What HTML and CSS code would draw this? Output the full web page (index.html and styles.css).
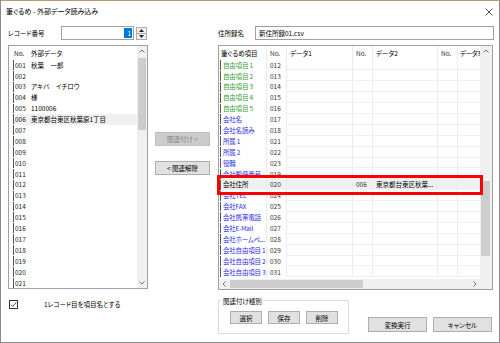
FILE: index.html
```html
<!DOCTYPE html>
<html lang="ja">
<head>
<meta charset="utf-8">
<link rel="stylesheet" href="styles.css">
</head>
<body>
<div class="window">
  <div class="titlebar">
    <span class="title">筆ぐるめ - 外部データ読み込み</span>
    <svg class="close" width="8" height="8" viewBox="0 0 8 8"><path d="M0.5 0.5L7.5 7.5M7.5 0.5L0.5 7.5" stroke="#222" stroke-width="0.8" fill="none"/></svg>
  </div>
  <div class="client">
    <div class="col-left">
      <div class="field-row">
        <span class="label">レコード番号</span>
        <div class="input num"><span class="sel">1</span></div>
        <div class="spin">
          <span class="spin-btn"><svg width="5" height="3" viewBox="0 0 5 3"><path d="M0 3L2.5 0L5 3Z" fill="#222"/></svg></span>
          <span class="spin-btn"><svg width="5" height="3" viewBox="0 0 5 3"><path d="M0 0L2.5 3L5 0Z" fill="#222"/></svg></span>
        </div>
      </div>
      <div class="listbox">
        <div class="lb-body">
          <div class="lb-head"><span class="c-no">No.</span><span class="c-data">外部データ</span></div>
          <div class="lb-row"><span class="c-no">001</span><span class="c-data">秋葉　一郎</span></div>
          <div class="lb-row"><span class="c-no">002</span><span class="c-data"></span></div>
          <div class="lb-row"><span class="c-no">003</span><span class="c-data">アキバ　イチロウ</span></div>
          <div class="lb-row"><span class="c-no">004</span><span class="c-data">様</span></div>
          <div class="lb-row"><span class="c-no">005</span><span class="c-data">1100006</span></div>
          <div class="lb-row hl"><span class="c-no">006</span><span class="c-data">東京都台東区秋葉原1丁目</span></div>
          <div class="lb-row"><span class="c-no">007</span><span class="c-data"></span></div>
          <div class="lb-row"><span class="c-no">008</span><span class="c-data"></span></div>
          <div class="lb-row"><span class="c-no">009</span><span class="c-data"></span></div>
          <div class="lb-row"><span class="c-no">010</span><span class="c-data"></span></div>
          <div class="lb-row"><span class="c-no">011</span><span class="c-data"></span></div>
          <div class="lb-row"><span class="c-no">012</span><span class="c-data"></span></div>
          <div class="lb-row"><span class="c-no">013</span><span class="c-data"></span></div>
          <div class="lb-row"><span class="c-no">014</span><span class="c-data"></span></div>
          <div class="lb-row"><span class="c-no">015</span><span class="c-data"></span></div>
          <div class="lb-row"><span class="c-no">016</span><span class="c-data"></span></div>
          <div class="lb-row"><span class="c-no">017</span><span class="c-data"></span></div>
          <div class="lb-row"><span class="c-no">018</span><span class="c-data"></span></div>
          <div class="lb-row"><span class="c-no">019</span><span class="c-data"></span></div>
          <div class="lb-row"><span class="c-no">020</span><span class="c-data"></span></div>
          <div class="lb-row"><span class="c-no">021</span><span class="c-data"></span></div>
        </div>
        <div class="vscroll lb-scroll">
          <span class="arrow"><svg width="6" height="4" viewBox="0 0 6 4"><path d="M0.5 3.5L3 1L5.5 3.5" stroke="#606060" stroke-width="0.9" fill="none"/></svg></span>
          <span class="track"><span class="thumb"></span></span>
          <span class="arrow"><svg width="6" height="4" viewBox="0 0 6 4"><path d="M0.5 0.5L3 3L5.5 0.5" stroke="#606060" stroke-width="0.9" fill="none"/></svg></span>
        </div>
      </div>
      <div class="check-row">
        <span class="checkbox"><svg width="7" height="7" viewBox="0 0 7 7"><path d="M1 3.6L2.8 5.4L6.2 1.4" stroke="#333" stroke-width="0.9" fill="none"/></svg></span>
        <span class="check-label">1レコード目を項目名とする</span>
      </div>
    </div>

    <div class="col-mid">
      <button class="btn disabled">関連付け &gt;</button>
      <button class="btn">&lt; 関連解除</button>
    </div>

    <div class="col-right">
      <div class="field-row">
        <span class="label">住所録名</span>
        <div class="input wide">新住所録01.csv</div>
      </div>
      <div class="grid-wrap">
        <div class="grid">
          <div class="g-body">
            <div class="g-row g-head">
              <span class="g1">筆ぐるめ項目</span><span class="g2">No.</span><span class="g3">データ1</span><span class="g2">No.</span><span class="g3 w2">データ2</span><span class="g2">No.</span><span class="g3 w3">データ3</span>
            </div>
            <div class="g-row green"><span class="g1">自由項目 1</span><span class="g2">012</span><span class="g3"></span><span class="g2"></span><span class="g3 w2"></span><span class="g2"></span><span class="g3 w3"></span></div>
            <div class="g-row green"><span class="g1">自由項目 2</span><span class="g2">013</span><span class="g3"></span><span class="g2"></span><span class="g3 w2"></span><span class="g2"></span><span class="g3 w3"></span></div>
            <div class="g-row green"><span class="g1">自由項目 3</span><span class="g2">014</span><span class="g3"></span><span class="g2"></span><span class="g3 w2"></span><span class="g2"></span><span class="g3 w3"></span></div>
            <div class="g-row green"><span class="g1">自由項目 4</span><span class="g2">015</span><span class="g3"></span><span class="g2"></span><span class="g3 w2"></span><span class="g2"></span><span class="g3 w3"></span></div>
            <div class="g-row green"><span class="g1">自由項目 5</span><span class="g2">016</span><span class="g3"></span><span class="g2"></span><span class="g3 w2"></span><span class="g2"></span><span class="g3 w3"></span></div>
            <div class="g-row blue"><span class="g1">会社名</span><span class="g2">017</span><span class="g3"></span><span class="g2"></span><span class="g3 w2"></span><span class="g2"></span><span class="g3 w3"></span></div>
            <div class="g-row blue"><span class="g1">会社名読み</span><span class="g2">018</span><span class="g3"></span><span class="g2"></span><span class="g3 w2"></span><span class="g2"></span><span class="g3 w3"></span></div>
            <div class="g-row blue"><span class="g1">所属 1</span><span class="g2">021</span><span class="g3"></span><span class="g2"></span><span class="g3 w2"></span><span class="g2"></span><span class="g3 w3"></span></div>
            <div class="g-row blue"><span class="g1">所属 2</span><span class="g2">022</span><span class="g3"></span><span class="g2"></span><span class="g3 w2"></span><span class="g2"></span><span class="g3 w3"></span></div>
            <div class="g-row blue"><span class="g1">役職</span><span class="g2">023</span><span class="g3"></span><span class="g2"></span><span class="g3 w2"></span><span class="g2"></span><span class="g3 w3"></span></div>
            <div class="g-row blue"><span class="g1">会社郵便番号</span><span class="g2">019</span><span class="g3"></span><span class="g2"></span><span class="g3 w2"></span><span class="g2"></span><span class="g3 w3"></span></div>
            <div class="g-row sel-row"><span class="g1">会社住所</span><span class="g2">020</span><span class="g3"></span><span class="g2">006</span><span class="g3 w2">東京都台東区秋葉...</span><span class="g2"></span><span class="g3 w3"></span></div>
            <div class="g-row blue"><span class="g1">会社TEL</span><span class="g2">024</span><span class="g3"></span><span class="g2"></span><span class="g3 w2"></span><span class="g2"></span><span class="g3 w3"></span></div>
            <div class="g-row blue"><span class="g1">会社FAX</span><span class="g2">025</span><span class="g3"></span><span class="g2"></span><span class="g3 w2"></span><span class="g2"></span><span class="g3 w3"></span></div>
            <div class="g-row blue"><span class="g1">会社携帯電話</span><span class="g2">026</span><span class="g3"></span><span class="g2"></span><span class="g3 w2"></span><span class="g2"></span><span class="g3 w3"></span></div>
            <div class="g-row blue"><span class="g1">会社E-Mail</span><span class="g2">027</span><span class="g3"></span><span class="g2"></span><span class="g3 w2"></span><span class="g2"></span><span class="g3 w3"></span></div>
            <div class="g-row blue"><span class="g1">会社ホームペ...</span><span class="g2">028</span><span class="g3"></span><span class="g2"></span><span class="g3 w2"></span><span class="g2"></span><span class="g3 w3"></span></div>
            <div class="g-row blue"><span class="g1">会社自由項目 1</span><span class="g2">029</span><span class="g3"></span><span class="g2"></span><span class="g3 w2"></span><span class="g2"></span><span class="g3 w3"></span></div>
            <div class="g-row blue"><span class="g1">会社自由項目 2</span><span class="g2">030</span><span class="g3"></span><span class="g2"></span><span class="g3 w2"></span><span class="g2"></span><span class="g3 w3"></span></div>
            <div class="g-row blue"><span class="g1">会社自由項目 3</span><span class="g2">031</span><span class="g3"></span><span class="g2"></span><span class="g3 w2"></span><span class="g2"></span><span class="g3 w3"></span></div>
          </div>
          <div class="vscroll g-vscroll">
            <span class="arrow"><svg width="6" height="4" viewBox="0 0 6 4"><path d="M0.5 3.5L3 1L5.5 3.5" stroke="#606060" stroke-width="0.9" fill="none"/></svg></span>
            <span class="track"><span class="thumb"></span></span>
          </div>
          <div class="hscroll">
            <span class="harrow"><svg width="4" height="6" viewBox="0 0 4 6"><path d="M3.5 0.5L1 3L3.5 5.5" stroke="#606060" stroke-width="0.9" fill="none"/></svg></span>
            <span class="htrack"><span class="hthumb"></span></span>
            <span class="harrow"><svg width="4" height="6" viewBox="0 0 4 6"><path d="M0.5 0.5L3 3L0.5 5.5" stroke="#606060" stroke-width="0.9" fill="none"/></svg></span>
          </div>
          <div class="corner"></div>
        </div>
        <div class="red-mark"></div>
      </div>
      <div class="bottom-row">
        <div class="group">
          <span class="group-label">関連付け種別</span>
          <div class="group-btns">
            <button class="btn small">選択</button>
            <button class="btn small">保存</button>
            <button class="btn small">削除</button>
          </div>
        </div>
        <div class="actions">
          <button class="btn action">変換実行</button>
          <button class="btn action">キャンセル</button>
        </div>
      </div>
    </div>
  </div>
</div>
</body>
</html>
```

FILE: styles.css
```css
* { box-sizing: border-box; margin: 0; padding: 0; }
html, body { width: 500px; height: 343px; overflow: hidden; background: #fff; }
body {
  font-family: "Noto Sans CJK JP", "Noto Sans", sans-serif;
  font-size: 6.5px;
  line-height: 1;
  color: #000;
  font-feature-settings: "palt";
}
.window {
  width: 500px;
  height: 343px;
  border: 1px solid #8a8a8a;
  border-top-color: #b89a72;
  background: #fff;
  display: flex;
  flex-direction: column;
}
.titlebar {
  height: 21px;
  display: flex;
  align-items: center;
  justify-content: space-between;
  padding: 0 6px 0 5px;
}
.title { font-size: 7px; }
.client {
  display: flex;
  padding: 4px 0 0 7px;
  flex: 1;
}
.col-left { width: 140px; display: flex; flex-direction: column; }
.col-mid { width: 70px; display: flex; flex-direction: column; align-items: flex-start; padding: 106px 0 0 7px; gap: 15px; }
.col-right { width: 276px; display: flex; flex-direction: column; }

.field-row { height: 14px; display: flex; align-items: center; }
.label { flex: none; }
.col-left .label { width: 53px; }
.col-right .label { width: 37px; }
.input {
  height: 14px;
  border: 1px solid #a0a0a0;
  background: #fff;
  display: flex;
  align-items: center;
}
.input.num { width: 73px; justify-content: flex-end; padding-right: 1px; }
.sel { background: #0078d7; color: #fff; width: 8px; height: 10px; display: flex; align-items: center; justify-content: flex-end; padding-right: 1px; }
.input.wide { width: 239px; padding-left: 3px; }
.spin { width: 11px; height: 13px; margin-left: 2px; border: 1px solid #adadad; display: flex; flex-direction: column; }
.spin-btn { flex: 1; display: flex; align-items: center; justify-content: center; background: #f0f0f0; }
.spin-btn + .spin-btn { border-top: 1px solid #adadad; }

.listbox {
  margin-top: 5px;
  height: 244px;
  border: 1px solid #a0a0a0;
  display: flex;
}
.lb-body { flex: 1; padding-left: 4px; }
.lb-head { height: 13.5px; display: flex; align-items: center; }
.lb-row { height: 10.9px; display: flex; align-items: center; }
.lb-row.hl { background: #f0f0f0; }
.c-no { width: 18px; flex: none; padding-left: 1px; color: #222; }
.lb-row .c-no { border-left: 1px solid #555; height: 9.9px; display: flex; align-items: center; }
.c-data { white-space: nowrap; }

.vscroll { width: 10px; background: #f0f0f0; display: flex; flex-direction: column; }
.arrow { height: 10px; display: flex; align-items: center; justify-content: center; flex: none; }
.track { flex: 1; display: flex; flex-direction: column; }
.lb-scroll .thumb { margin: 1.5px 1px 0; height: 72px; background: #cdcdcd; }

.check-row { margin-top: 11px; display: flex; align-items: center; height: 9px; }
.checkbox { width: 9px; height: 9px; border: 1px solid #333; background: #fff; display: flex; align-items: center; justify-content: center; margin-left: 1px; }
.check-label { margin-left: 26px; }

.btn {
  font-family: inherit;
  font-size: 6.5px;
  font-feature-settings: "palt";
  background: #e1e1e1;
  border: 1px solid #adadad;
  color: #000;
  display: flex;
  align-items: center;
  justify-content: center;
}
.col-mid .btn { width: 55px; height: 14px; }
.btn.disabled { background: #cccccc; border-color: #bfbfbf; color: #838383; }

.grid-wrap { margin-top: 5px; position: relative; }
.grid {
  height: 245px;
  width: 275px;
  border: 1px solid #a0a0a0;
  display: grid;
  grid-template-columns: 261px 12px;
  grid-template-rows: 1fr 10px;
}
.g-body { overflow: hidden; }
.g-row { display: flex; height: 10.9px; align-items: center; }
.g-row > span { height: 100%; display: flex; align-items: center; white-space: nowrap; overflow: hidden; flex: none; }
.g-head { height: 13.5px; }
.g1 { width: 48px; padding-left: 2px; border-right: 1px solid #ececec; }
.g2 { width: 20px; padding-left: 3px; border-right: 1px solid #ececec; color: #333; }
.g3 { width: 66px; padding-left: 3px; border-right: 1px solid #ececec; }
.g3.w2 { width: 65px; }
.g3.w3 { width: 22px; border-right: none; }
.g-head .g3.w3 { padding-left: 2px; letter-spacing: -0.35px; }
.g-row:not(.g-head) .g3, .g-row:not(.g-head) .g2:not(:nth-child(2)) { border-bottom: 1px solid #f0f0f0; }
.g-row:not(.g-head) .g1 { border-left: 1px solid #555; margin-left: 1px; width: 47px; padding-left: 2px; height: 9.9px; letter-spacing: -0.2px; }
.green .g1 { color: #2f9a2f; }
.blue .g1 { color: #2a2ae6; }
.sel-row { background: #f0f0f0; }
.sel-row .g1 { color: #000; }

.g-vscroll { grid-row: 1; grid-column: 2; width: 12px; padding-right: 1px; }
.g-vscroll .thumb { margin: 125px 1px 0; height: 75px; background: #cdcdcd; }
.hscroll { grid-row: 2; grid-column: 1; background: #f0f0f0; display: flex; align-items: center; }
.harrow { width: 10px; height: 100%; display: flex; align-items: center; justify-content: center; flex: none; }
.htrack { flex: 1; height: 100%; display: flex; align-items: center; }
.hthumb { margin-left: 1px; width: 133px; height: 8px; background: #cdcdcd; }
.corner { grid-row: 2; grid-column: 2; background: #f0f0f0; }

.red-mark {
  position: absolute;
  left: -1px;
  top: 130px;
  width: 266px;
  height: 20px;
  border: 3px solid #f00;
}

.bottom-row { display: flex; margin-top: 8px; }
.group {
  position: relative;
  width: 131px;
  height: 34px;
  border: 1px solid #dcdcdc;
  margin-top: 2px;
}
.group-label {
  position: absolute;
  left: 3px;
  top: -3px;
  background: #fff;
  padding: 0 1px;
}
.group-btns { display: flex; gap: 6px; padding: 10px 0 0 11px; }
.btn.small { width: 32px; height: 13px; }
.actions { display: flex; gap: 6px; margin-left: 19px; padding-top: 19px; }
.btn.action { width: 59px; height: 15px; }
```
